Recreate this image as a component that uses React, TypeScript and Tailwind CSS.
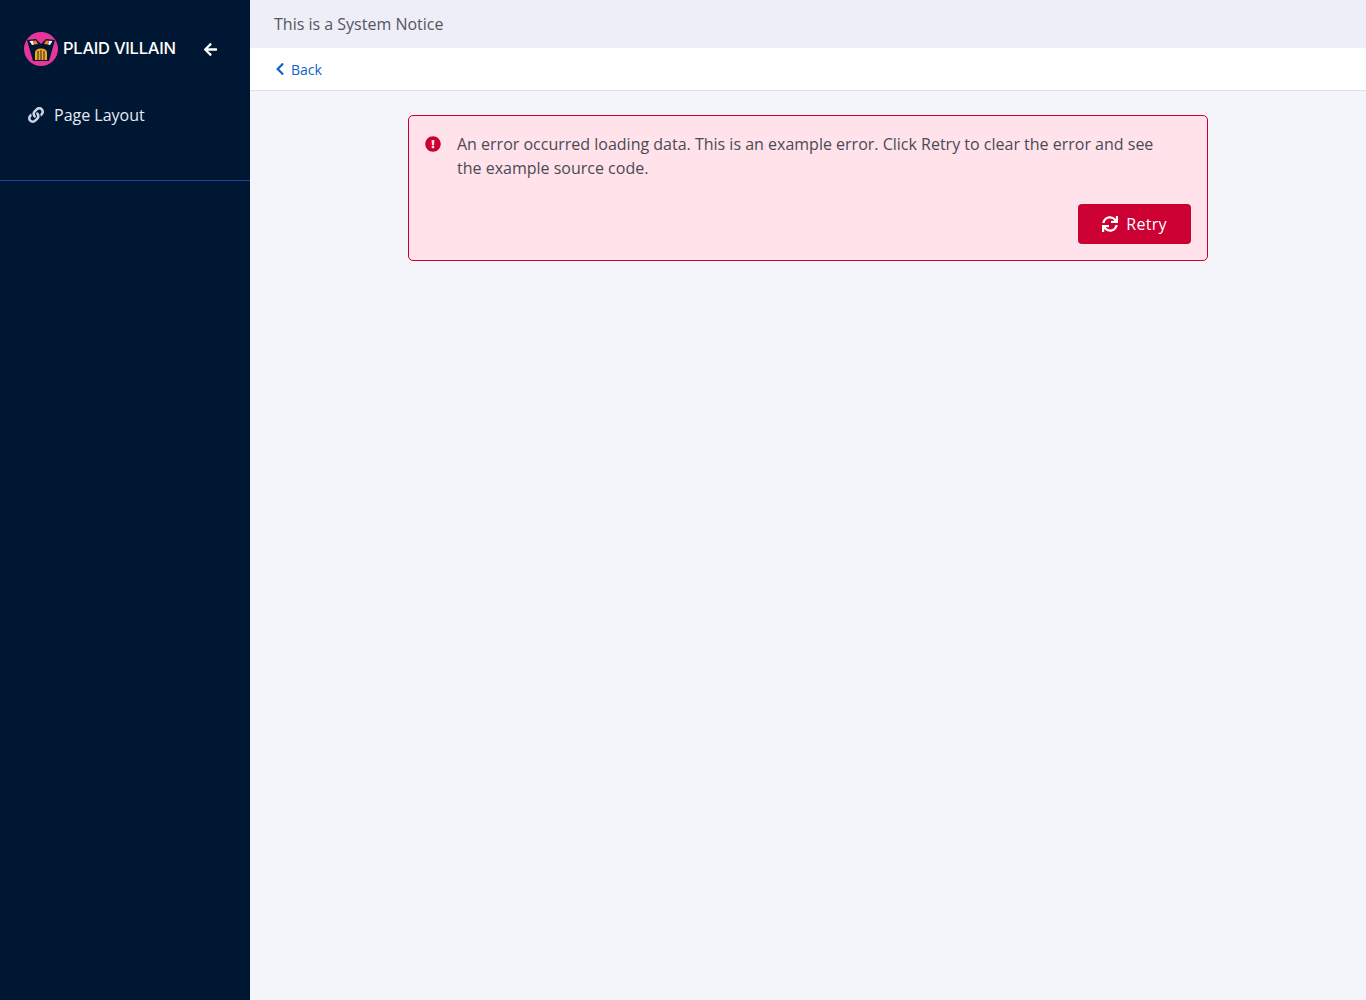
import { FaArrowLeft, FaChevronLeft, FaExclamationCircle, FaLink, FaSync } from "react-icons/fa";

const Logo = () => (
  <svg width="34" height="34" viewBox="0 0 34 34" className="shrink-0">
    <circle cx="17" cy="17" r="17" fill="#e8359b" />
    {/* mask */}
    <path d="M3 8 L12 7 L17 12 L22 7 L31 8 L25 29 L9 29 Z" fill="#001733" />
    {/* eyes */}
    <path d="M5.5 9 L9 8.7 L10 12.6 L8 13 Z" fill="#fff" />
    <path d="M28.5 9 L25 8.7 L24 12.6 L26 13 Z" fill="#fff" />
    <path d="M9 8.7 L12 8.5 L14 12 L10 12.6 Z" fill="#f58220" />
    <path d="M25 8.7 L22 8.5 L20 12 L24 12.6 Z" fill="#f58220" />
    {/* mouth */}
    <path d="M11 28 L11 21 Q11 16.5 17 16.5 Q23 16.5 23 21 L23 28 Z" fill="#f5a623" />
    <path d="M14 19 V28 M17 18 V28 M20 19 V28" stroke="#001733" strokeWidth="0.9" />
  </svg>
);

const Sidebar = () => (
  <aside className="w-[250px] shrink-0 min-h-[1000px] bg-[#001733]">
    <div className="h-[181px] border-b border-[#2b3f9c]">
      <div className="flex items-center pt-8 pl-6">
        <Logo />
        <span className="ml-[5px] w-[140px] -mt-[1px] text-white text-[16.5px] font-medium tracking-[-0.25px] font-['Inter',sans-serif]">
          PLAID VILLAIN
        </span>
        <button className="text-white">
          <FaArrowLeft size={15} />
        </button>
      </div>
      <div className="pt-[37px] pl-7 flex items-center gap-[10px] text-[#e6e9f5]">
        <FaLink size={16} className="text-[#ccd3e8]" />
        <span className="text-base leading-6">Page Layout</span>
      </div>
    </div>
  </aside>
);

const ErrorCard = () => (
  <div className="w-[800px] h-[146px] mt-6 mx-auto bg-[#ffe2ea] border border-[#cc0033] rounded-[5px] pt-4 px-4">
    <div className="flex">
      <FaExclamationCircle size={16} className="text-[#cc0033] mt-1 shrink-0" />
      <p className="ml-4 text-base leading-6 text-[#4a4a55] w-[720px]">
        An error occurred loading data. This is an example error. Click Retry to clear the error and see the example source code.
      </p>
    </div>
    <div className="flex justify-end mt-6">
      <button className="w-[113px] h-10 flex items-center justify-center gap-2 bg-[#cc0033] text-white rounded-[4px] text-base font-medium tracking-[0.25px]">
        <FaSync size={16} />
        Retry
      </button>
    </div>
  </div>
);

export default function App() {
  return (
    <div className="flex min-h-[1000px] bg-[#f3f5fb] font-['Open_Sans',sans-serif]">
      <Sidebar />
      <main className="flex-1">
        <div className="h-12 bg-[#edeef7] pl-6 flex items-center text-base text-[#55555f]">
          This is a System Notice
        </div>
        <div className="h-[43px] bg-white border-b border-[#e0e1f0] pl-6 flex items-center text-sm text-[#0f62c9]">
          <FaChevronLeft size={14} className="-ml-[1px]" />
          <span className="ml-[4px] pt-[1px]">Back</span>
        </div>
        <ErrorCard />
      </main>
    </div>
  );
}
